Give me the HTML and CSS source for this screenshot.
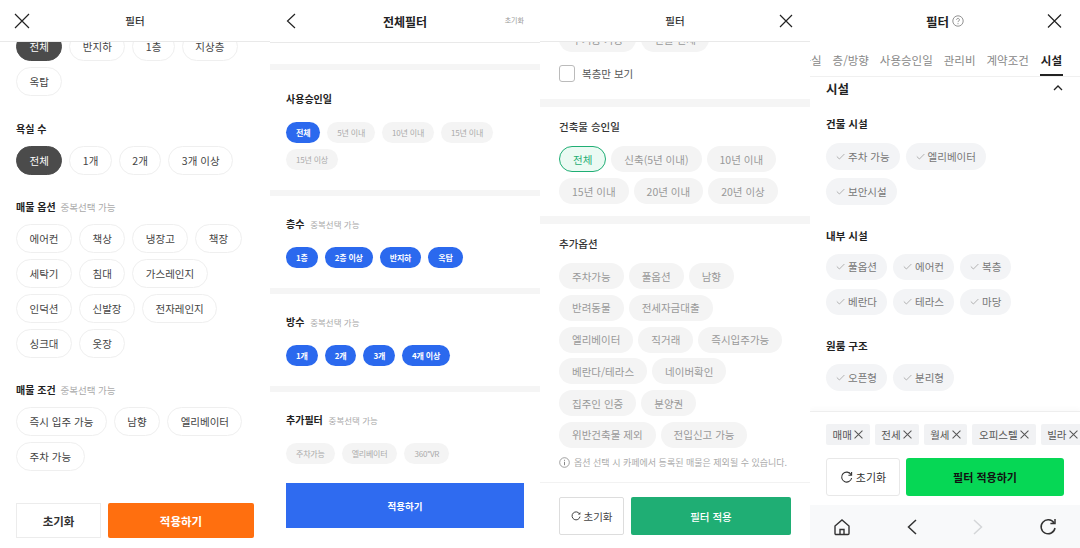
FILE: index.html
```html
<!DOCTYPE html>
<html lang="ko">
<head>
    <meta charset="UTF-8">
    <meta name="viewport" content="width=device-width, initial-scale=1.0">
    <title>필터</title>
    <link rel="stylesheet" href="styles.css">
</head>
<body>
<div class="screens">

    <!-- 첫번째 화면 -->
    <section class="panel p1">
        <header class="top">
            <svg class="top-icon left" width="16" height="16" viewBox="0 0 16 16"><path d="M1 1l14 14M15 1L1 15" class="line"/></svg>
            <h2 class="title">필터</h2>
        </header>
        <div class="body">
            <div class="chips first">
                <span class="chip on">전체</span><span class="chip">반지하</span><span class="chip">1층</span><span class="chip">지상층</span><span class="chip">옥탑</span>
            </div>
            <h3 class="label">욕실 수</h3>
            <div class="chips">
                <span class="chip on">전체</span><span class="chip">1개</span><span class="chip">2개</span><span class="chip">3개 이상</span>
            </div>
            <h3 class="label">매물 옵션 <small>중복선택 가능</small></h3>
            <div class="chips">
                <span class="chip">에어컨</span><span class="chip">책상</span><span class="chip">냉장고</span><span class="chip">책장</span><span class="chip">세탁기</span><span class="chip">침대</span><span class="chip">가스레인지</span><span class="chip">인덕션</span><span class="chip">신발장</span><span class="chip">전자레인지</span><span class="chip">싱크대</span><span class="chip">옷장</span>
            </div>
            <h3 class="label">매물 조건 <small>중복선택 가능</small></h3>
            <div class="chips">
                <span class="chip">즉시 입주 가능</span><span class="chip">남향</span><span class="chip">엘리베이터</span><span class="chip">주차 가능</span>
            </div>
        </div>
        <footer class="actions">
            <button class="btn reset">초기화</button>
            <button class="btn apply">적용하기</button>
        </footer>
    </section>

    <!-- 두번째 화면 -->
    <section class="panel p2">
        <header class="top">
            <svg class="top-icon left" width="10" height="16" viewBox="0 0 10 16"><path d="M9 1L1.5 8 9 15" class="line"/></svg>
            <h2 class="title">전체필터</h2>
            <span class="top-reset">초기화</span>
        </header>
        <div class="body">
            <div class="group">
                <h3 class="label">사용승인일</h3>
                <div class="chips">
                    <span class="chip on">전체</span><span class="chip">5년 이내</span><span class="chip">10년 이내</span><span class="chip">15년 이내</span><span class="chip">15년 이상</span>
                </div>
            </div>
            <div class="group">
                <h3 class="label">층수 <small>중복선택 가능</small></h3>
                <div class="chips">
                    <span class="chip on">1층</span><span class="chip on">2층 이상</span><span class="chip on">반지하</span><span class="chip on">옥탑</span>
                </div>
            </div>
            <div class="group">
                <h3 class="label">방수 <small>중복선택 가능</small></h3>
                <div class="chips">
                    <span class="chip on">1개</span><span class="chip on">2개</span><span class="chip on">3개</span><span class="chip on">4개 이상</span>
                </div>
            </div>
            <div class="group">
                <h3 class="label">추가필터 <small>중복선택 가능</small></h3>
                <div class="chips">
                    <span class="chip">주차가능</span><span class="chip">엘리베이터</span><span class="chip">360°VR</span>
                </div>
            </div>
        </div>
        <footer class="actions">
            <button class="btn apply">적용하기</button>
        </footer>
    </section>

    <!-- 세번째 화면 -->
    <section class="panel p3">
        <header class="top">
            <h2 class="title">필터</h2>
            <svg class="top-icon right" width="14" height="14" viewBox="0 0 14 14"><path d="M1 1l12 12M13 1L1 13" class="line"/></svg>
        </header>
        <div class="body">
            <div class="chips first">
                <span class="chip">주거용 가능</span><span class="chip">건물 전체</span>
            </div>
            <label class="check"><span class="box"></span>복층만 보기</label>
            <div class="group">
                <h3 class="label">건축물 승인일</h3>
                <div class="chips">
                    <span class="chip on">전체</span><span class="chip">신축(5년 이내)</span><span class="chip">10년 이내</span><span class="chip">15년 이내</span><span class="chip">20년 이내</span><span class="chip">20년 이상</span>
                </div>
            </div>
            <div class="group">
                <h3 class="label">추가옵션</h3>
                <div class="chips tight">
                    <span class="chip">주차가능</span><span class="chip">풀옵션</span><span class="chip">남향</span><span class="chip">반려동물</span><span class="chip">전세자금대출</span><span class="chip">엘리베이터</span><span class="chip">직거래</span><span class="chip">즉시입주가능</span><span class="chip">베란다/테라스</span><span class="chip">네이버확인</span><span class="chip">집주인 인증</span><span class="chip">분양권</span><span class="chip">위반건축물 제외</span><span class="chip">전입신고 가능</span>
                </div>
                <p class="note">
                    <svg width="11" height="11" viewBox="0 0 11 11"><circle cx="5.5" cy="5.5" r="4.8" fill="none" stroke="#888" stroke-width=".8"/><path d="M5.5 4.8v3.4M5.5 2.8v1" stroke="#888" stroke-width="1"/></svg>
                    옵션 선택 시 카페에서 등록된 매물은 제외될 수 있습니다.
                </p>
            </div>
        </div>
        <footer class="actions">
            <button class="btn reset">
                <svg width="10" height="10" viewBox="0 0 10 10"><path d="M8.6 3A4 4 0 1 0 9 5.6" fill="none" stroke="#444" stroke-width="1"/><path d="M9.4 1v2.6H6.8z" fill="#444"/></svg>
                초기화
            </button>
            <button class="btn apply">필터 적용</button>
        </footer>
    </section>

    <!-- 네번째 화면 -->
    <section class="panel p4">
        <header class="top">
            <h2 class="title">필터
                <svg width="12" height="12" viewBox="0 0 12 12"><circle cx="6" cy="6" r="5.2" fill="none" stroke="#777" stroke-width=".8"/><path d="M4.6 4.8a1.4 1.4 0 1 1 2.2 1.1c-.5.4-.8.6-.8 1.2M6 8.2v1" fill="none" stroke="#777" stroke-width=".8"/></svg>
            </h2>
            <svg class="top-icon right" width="15" height="15" viewBox="0 0 15 15"><path d="M1 1l13 13M14 1L1 14" class="line"/></svg>
        </header>
        <nav class="tabs">
            <span>욕실</span><span>층/방향</span><span>사용승인일</span><span>관리비</span><span>계약조건</span><span class="on">시설</span>
        </nav>
        <div class="body">
            <div class="sec-head">
                <h3>시설</h3>
                <svg width="10" height="6" viewBox="0 0 10 6"><path d="M1 5l4-4 4 4" fill="none" stroke="#222" stroke-width="1.3"/></svg>
            </div>
            <h3 class="label">건물 시설</h3>
            <div class="chips">
                <span class="chip"><svg class="tick" viewBox="0 0 9 7"><path d="M.8 3.5l2.6 2.5L8.4 1"/></svg>주차 가능</span>
                <span class="chip"><svg class="tick" viewBox="0 0 9 7"><path d="M.8 3.5l2.6 2.5L8.4 1"/></svg>엘리베이터</span>
                <span class="chip"><svg class="tick" viewBox="0 0 9 7"><path d="M.8 3.5l2.6 2.5L8.4 1"/></svg>보안시설</span>
            </div>
            <h3 class="label">내부 시설</h3>
            <div class="chips">
                <span class="chip"><svg class="tick" viewBox="0 0 9 7"><path d="M.8 3.5l2.6 2.5L8.4 1"/></svg>풀옵션</span>
                <span class="chip"><svg class="tick" viewBox="0 0 9 7"><path d="M.8 3.5l2.6 2.5L8.4 1"/></svg>에어컨</span>
                <span class="chip"><svg class="tick" viewBox="0 0 9 7"><path d="M.8 3.5l2.6 2.5L8.4 1"/></svg>복층</span>
                <span class="chip"><svg class="tick" viewBox="0 0 9 7"><path d="M.8 3.5l2.6 2.5L8.4 1"/></svg>베란다</span>
                <span class="chip"><svg class="tick" viewBox="0 0 9 7"><path d="M.8 3.5l2.6 2.5L8.4 1"/></svg>테라스</span>
                <span class="chip"><svg class="tick" viewBox="0 0 9 7"><path d="M.8 3.5l2.6 2.5L8.4 1"/></svg>마당</span>
            </div>
            <h3 class="label">원룸 구조</h3>
            <div class="chips">
                <span class="chip"><svg class="tick" viewBox="0 0 9 7"><path d="M.8 3.5l2.6 2.5L8.4 1"/></svg>오픈형</span>
                <span class="chip"><svg class="tick" viewBox="0 0 9 7"><path d="M.8 3.5l2.6 2.5L8.4 1"/></svg>분리형</span>
            </div>
        </div>
        <div class="tags">
            <span class="tag">매매 <svg viewBox="0 0 8 8"><path d="M.5.5l7 7M7.5.5l-7 7"/></svg></span>
            <span class="tag">전세 <svg viewBox="0 0 8 8"><path d="M.5.5l7 7M7.5.5l-7 7"/></svg></span>
            <span class="tag">월세 <svg viewBox="0 0 8 8"><path d="M.5.5l7 7M7.5.5l-7 7"/></svg></span>
            <span class="tag">오피스텔 <svg viewBox="0 0 8 8"><path d="M.5.5l7 7M7.5.5l-7 7"/></svg></span>
            <span class="tag">빌라 <svg viewBox="0 0 8 8"><path d="M.5.5l7 7M7.5.5l-7 7"/></svg></span>
        </div>
        <footer class="actions">
            <button class="btn reset">
                <svg width="13" height="13" viewBox="0 0 13 13"><path d="M11 3.6A5 5 0 1 0 11.6 7" fill="none" stroke="#333" stroke-width="1.1"/><path d="M11.6 1v3.2H8.4" fill="none" stroke="#333" stroke-width="1.1"/></svg>
                초기화
            </button>
            <button class="btn apply">필터 적용하기</button>
        </footer>
        <!-- 브라우저 하단바 -->
        <div class="browser-bar">
            <svg width="18" height="18" viewBox="0 0 18 18"><path d="M2 8l7-6 7 6v7.5a1 1 0 0 1-1 1H3a1 1 0 0 1-1-1z" fill="none" stroke="#333" stroke-width="1.4"/><path d="M7 16.5v-5h4v5" fill="none" stroke="#333" stroke-width="1.4"/></svg>
            <svg width="10" height="16" viewBox="0 0 10 16"><path d="M9 1L1.5 8 9 15" fill="none" stroke="#333" stroke-width="1.5"/></svg>
            <svg width="10" height="16" viewBox="0 0 10 16"><path d="M1 1l7.5 7L1 15" fill="none" stroke="#d4d6d8" stroke-width="1.5"/></svg>
            <svg width="18" height="18" viewBox="0 0 18 18"><path d="M15 5A7 7 0 1 0 16 10" fill="none" stroke="#333" stroke-width="1.5"/><path d="M16 1v4.6h-4.6" fill="none" stroke="#333" stroke-width="1.5"/></svg>
        </div>
    </section>

</div>
</body>
</html>
```

FILE: styles.css
```css
* {
    box-sizing: border-box;
}

body {
    margin: 0;
    background-color: #fff;
    font-family: "Noto Sans CJK KR", "Noto Sans", sans-serif;
    color: #222;
}

.screens {
    display: flex;
    width: 1080px;
    height: 548px;
    overflow: hidden;
}

.panel {
    width: 270px;
    height: 548px;
    display: flex;
    flex-direction: column;
    overflow: hidden;
    background-color: #fff;
}

.top {
    position: relative;
    flex: none;
    height: 42px;
    display: flex;
    align-items: center;
    justify-content: center;
    border-bottom: 1px solid #e9e9e9;
}

.title {
    margin: 0;
    font-size: 10.5px;
    font-weight: 500;
    color: #333;
}

.top-icon {
    position: absolute;
    top: 50%;
    transform: translateY(-50%);
}

.line {
    fill: none;
    stroke: #222;
    stroke-width: 1.2;
}

.body {
    flex: 1;
    min-height: 0;
    overflow: hidden;
}

.chips {
    display: flex;
    flex-wrap: wrap;
}

.chip {
    display: inline-flex;
    align-items: center;
    border-radius: 15px;
    white-space: nowrap;
}

.label {
    height: 16px;
    margin: 0;
    font-size: 10px;
    line-height: 16px;
    font-weight: 700;
    color: #222;
}

.label small {
    margin-left: 2px;
    font-size: 9.5px;
    line-height: 1;
    font-weight: 400;
    color: #aaa;
}

.actions {
    flex: none;
    display: flex;
}

.btn {
    border: none;
    font-family: inherit;
    padding: 0;
    cursor: pointer;
}

/* 첫번째 화면 */
.p1 .top-icon {
    left: 14px;
}

.p1 .body {
    padding: 0 16px;
}

.p1 .chips {
    gap: 6px 7px;
}

.p1 .chips.first {
    margin-top: -10px;
}

.p1 .chip {
    height: 29px;
    padding: 0 12.5px;
    border: 1px solid #efefef;
    font-size: 10.5px;
    color: #444;
}

.p1 .chip.on {
    background-color: #4b4b4b;
    border-color: #4b4b4b;
    color: #fff;
}

.p1 .label {
    margin: 24px 0 9px;
}

.p1 .chips.first + .label {
    margin-top: 25px;
}

.p1 .actions {
    gap: 7px;
    padding: 0 16px 10px;
}

.p1 .btn {
    height: 35px;
    font-size: 11.5px;
    font-weight: 700;
}

.p1 .reset {
    width: 85px;
    background-color: #fff;
    border: 1px solid #ececec;
    color: #333;
}

.p1 .apply {
    flex: 1;
    background-color: #ff6f0f;
    border-radius: 2px;
    color: #fff;
}

/* 두번째 화면 */
.p2 .top {
    height: 43px;
}

.p2 .title {
    font-size: 12px;
    font-weight: 700;
    color: #222;
}

.p2 .top-icon {
    left: 16px;
}

.top-reset {
    position: absolute;
    right: 16px;
    top: 15px;
    font-size: 7px;
    color: #999;
}

.p2 .body {
    padding-top: 21px;
}

.p2 .group {
    padding: 21px 16px 20px;
    border-top: 6px solid #f5f5f5;
}

.p2 .group + .group {
    padding-top: 20px;
}

.p2 .group:last-child {
    padding-bottom: 0;
}

.p2 .label {
    margin-bottom: 15px;
}

.p2 .label small {
    margin-left: 3px;
    font-size: 8.5px;
}

.p2 .chips {
    gap: 6px 7px;
}

.p2 .chip {
    height: 21px;
    padding: 0 10px;
    background-color: #f4f4f4;
    font-size: 8px;
    letter-spacing: -0.2px;
    color: #aaa;
}

.p2 .chip.on {
    background-color: #2b69ee;
    color: #fff;
    font-weight: 700;
}

.p2 .actions {
    padding: 0 16px 20px;
}

.p2 .apply {
    width: 100%;
    height: 45px;
    background-color: #2f6bf0;
    color: #fff;
    font-size: 9.5px;
    font-weight: 700;
}

/* 세번째 화면 */
.p3 .top-icon {
    right: 17px;
}

.p3 .chips {
    gap: 6px 5px;
}

.p3 .chips.tight {
    gap: 5.75px 5px;
}

.p3 .chips.first {
    margin: -16px 19px 0;
}

.p3 .chip {
    height: 26px;
    padding: 0 13px;
    background-color: #f4f4f4;
    font-size: 10.5px;
    color: #999;
}

.p3 .chip.on {
    background-color: #ebfaf3;
    border: 1px solid #1fae74;
    color: #1fae74;
}

.check {
    display: flex;
    align-items: center;
    gap: 7px;
    margin: 13px 19px 17px;
    font-size: 10.5px;
    color: #555;
}

.box {
    width: 16px;
    height: 17px;
    border: 1px solid #bbb;
    border-radius: 3px;
}

.p3 .group {
    padding: 12px 19px 12px;
    border-top: 8px solid #f5f5f5;
}

.p3 .label {
    margin-bottom: 11px;
    font-size: 10.5px;
    font-weight: 500;
    color: #333;
}

.note {
    display: flex;
    align-items: center;
    gap: 4px;
    margin: 9px 0 0;
    font-size: 9px;
    line-height: 12px;
    color: #aaa;
    white-space: nowrap;
}

.p3 .actions {
    gap: 7px;
    padding: 14px 19px 13px;
    border-top: 1px solid #f2f2f2;
}

.p3 .btn {
    height: 38px;
}

.p3 .reset {
    width: 65px;
    display: flex;
    align-items: center;
    justify-content: center;
    gap: 3px;
    background-color: #fff;
    border: 1px solid #ddd;
    border-radius: 2px;
    font-size: 10.5px;
    color: #444;
}

.p3 .apply {
    flex: 1;
    background-color: #1fae74;
    border-radius: 2px;
    color: #fff;
    font-size: 10.5px;
    font-weight: 500;
}

/* 네번째 화면 */
.p4 .top {
    border-bottom: none;
}

.p4 .title {
    display: flex;
    align-items: center;
    gap: 3px;
    font-size: 12.5px;
    font-weight: 700;
    color: #222;
}

.p4 .top-icon {
    right: 18px;
}

.tabs {
    flex: none;
    display: flex;
    justify-content: flex-end;
    gap: 11px;
    height: 35px;
    padding: 9px 17px 0 0;
    border-bottom: 1px solid #f0f0f0;
    font-size: 11.5px;
    line-height: 18px;
    color: #888;
    white-space: nowrap;
}

.tabs span {
    height: 25px;
}

.tabs .on {
    padding: 0 1px;
    border-bottom: 2px solid #222;
    font-weight: 700;
    color: #222;
}

.p4 .body {
    padding: 0 16px;
}

.sec-head {
    display: flex;
    align-items: center;
    justify-content: space-between;
    height: 22px;
    padding-right: 1px;
}

.sec-head h3 {
    margin: 0;
    font-size: 12.5px;
    font-weight: 700;
}

.p4 .label {
    margin: 23px 0 10px;
    font-size: 10.5px;
}

.p4 .sec-head + .label {
    margin: 17px 0 11px;
}

.p4 .chips {
    gap: 8.5px 6px;
    max-width: 225px;
}

.p4 .chip {
    height: 26.5px;
    gap: 3px;
    padding: 0 10px;
    background-color: #f3f4f6;
    font-size: 10.5px;
    color: #777;
}

.tick {
    width: 9px;
    height: 7px;
    fill: none;
    stroke: #aaa;
    stroke-width: .9;
}

.tags {
    flex: none;
    display: flex;
    gap: 5px;
    padding: 12px 0 13px 16px;
    border-top: 1px solid #eee;
    box-shadow: 0 -3px 4px rgba(0, 0, 0, 0.02);
}

.tag {
    flex: none;
    display: inline-flex;
    align-items: center;
    gap: 2.5px;
    height: 21px;
    padding: 0 6.5px;
    background-color: #f1f2f4;
    border-radius: 2px;
    font-size: 10.5px;
    color: #555;
}

.tag svg {
    width: 9px;
    height: 9px;
    fill: none;
    stroke: #555;
    stroke-width: .9;
}

.p4 .actions {
    gap: 6px;
    padding: 0 16px 9px;
}

.p4 .btn {
    height: 38px;
}

.p4 .reset {
    width: 74px;
    display: flex;
    align-items: center;
    justify-content: center;
    gap: 3px;
    background-color: #fff;
    border: 1px solid #e8e8e8;
    border-radius: 3px;
    font-size: 11px;
    color: #333;
}

.p4 .apply {
    flex: 1;
    background-color: #06d755;
    border-radius: 3px;
    font-size: 11px;
    font-weight: 700;
    color: #111;
}

.browser-bar {
    flex: none;
    height: 43px;
    display: flex;
    align-items: center;
    justify-content: space-between;
    padding: 0 23px 0 23px;
    background-color: #f8f9fa;
}
```
